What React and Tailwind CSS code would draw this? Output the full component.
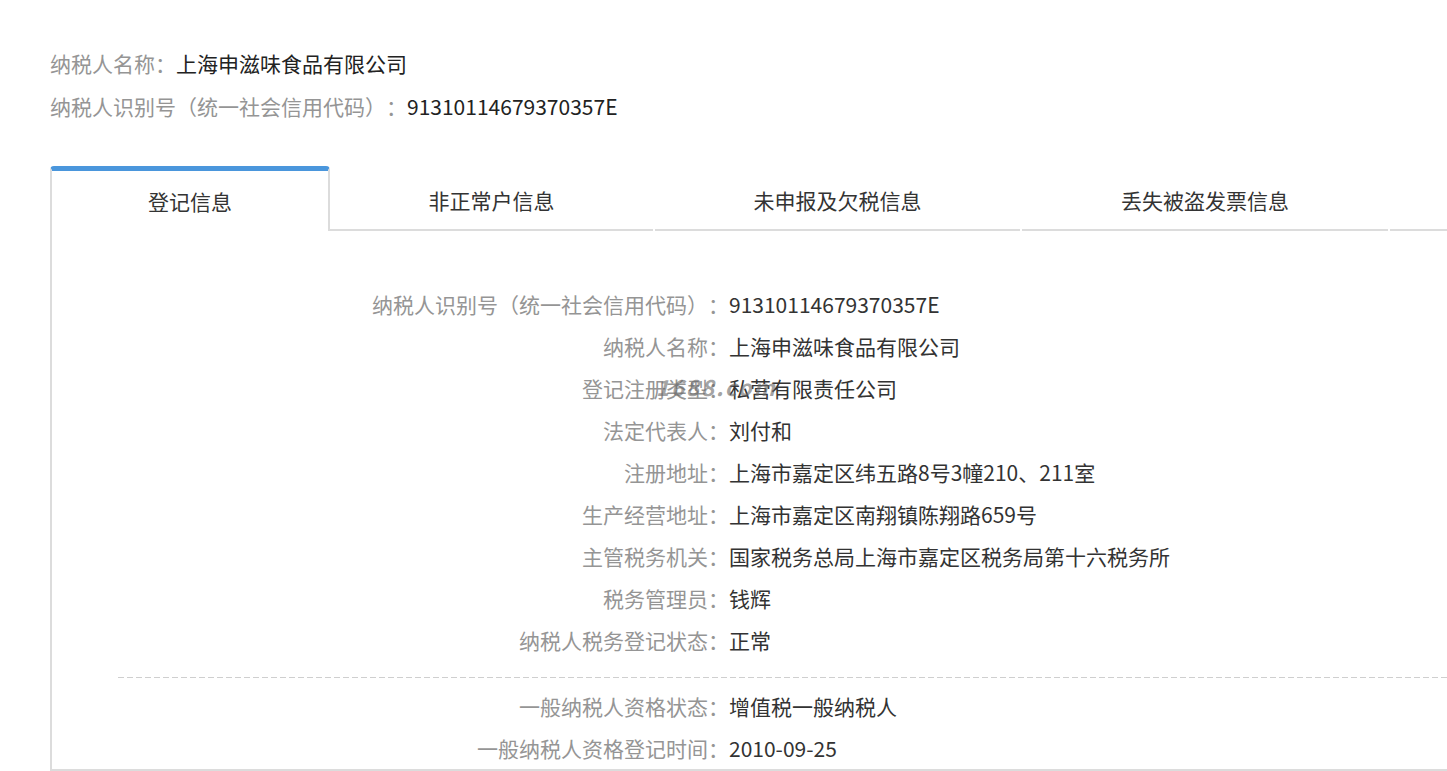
import React from 'react';

const rows = [
  ['纳税人识别号（统一社会信用代码）：', '91310114679370357E'],
  ['纳税人名称：', '上海申滋味食品有限公司'],
  ['登记注册类型：', '私营有限责任公司', true],
  ['法定代表人：', '刘付和'],
  ['注册地址：', '上海市嘉定区纬五路8号3幢210、211室'],
  ['生产经营地址：', '上海市嘉定区南翔镇陈翔路659号'],
  ['主管税务机关：', '国家税务总局上海市嘉定区税务局第十六税务所'],
  ['税务管理员：', '钱辉'],
  ['纳税人税务登记状态：', '正常'],
];

const rows2 = [
  ['一般纳税人资格状态：', '增值税一般纳税人'],
  ['一般纳税人资格登记时间：', '2010-09-25'],
];

const tabs = [
  { label: '非正常户信息', w: 'w-[323px]' },
  { label: '未申报及欠税信息', w: 'w-[365px]' },
  { label: '丢失被盗发票信息', w: 'w-[366px]' },
];

function Row({ label, value, mark }) {
  return (
    <div className="relative flex h-[42px] items-center">
      <span className="w-[677px] shrink-0 text-right text-[#959595]">{label}</span>
      <span className="text-[#333]">{value}</span>
      {mark && (
        <span className="absolute left-[604px] top-[8px] text-[22px] italic font-bold text-[#666]/60 tracking-[2px]">
          1688.com
        </span>
      )}
    </div>
  );
}

export default function App() {
  return (
    <div
      className="min-h-screen bg-white pl-[50px] text-[21px] leading-none [text-spacing-trim:space-all]"
      style={{ fontFamily: '"Noto Sans CJK SC", "Noto Sans", sans-serif' }}
    >
      {/* header info */}
      <div className="pt-[42px]">
        <div className="flex h-[43px] items-center">
          <span className="text-[#959595]">纳税人名称：</span>
          <span className="text-[#222]">上海申滋味食品有限公司</span>
        </div>
        <div className="flex h-[43px] items-center">
          <span className="text-[#959595]">纳税人识别号（统一社会信用代码）：</span>
          <span className="text-[#222]">91310114679370357E</span>
        </div>
      </div>

      {/* tabs */}
      <div className="mt-[38px] flex items-end">
        <div className="flex h-[65px] w-[280px] shrink-0 items-center justify-center rounded-t-[4px] border-x-2 border-t-[5px] border-x-[#dcdcdc] border-t-[#4a96dc] text-[#333]">
          登记信息
        </div>
        {tabs.map((t, i) => (
          <div
            key={t.label}
            className={`flex h-[65px] shrink-0 items-center justify-center border-b-2 border-[#dcdcdc] pt-[5px] text-[#333] ${t.w} ${i > 0 ? 'ml-[2px]' : ''}`}
          >
            {t.label}
          </div>
        ))}
        <div className="ml-[2px] h-[65px] flex-1 border-b-2 border-[#dcdcdc]" />
      </div>

      {/* panel */}
      <div className="border-b-2 border-l-2 border-[#dcdcdc] pt-[52px]">
        {rows.map(([l, v, m]) => (
          <Row key={l} label={l} value={v} mark={m} />
        ))}
        <div className="mb-[7px] ml-[66px] mt-[16px] h-px bg-[repeating-linear-gradient(90deg,#cfcfcf_0_6px,transparent_6px_9px)]" />
        {rows2.map(([l, v]) => (
          <Row key={l} label={l} value={v} />
        ))}
      </div>
    </div>
  );
}
